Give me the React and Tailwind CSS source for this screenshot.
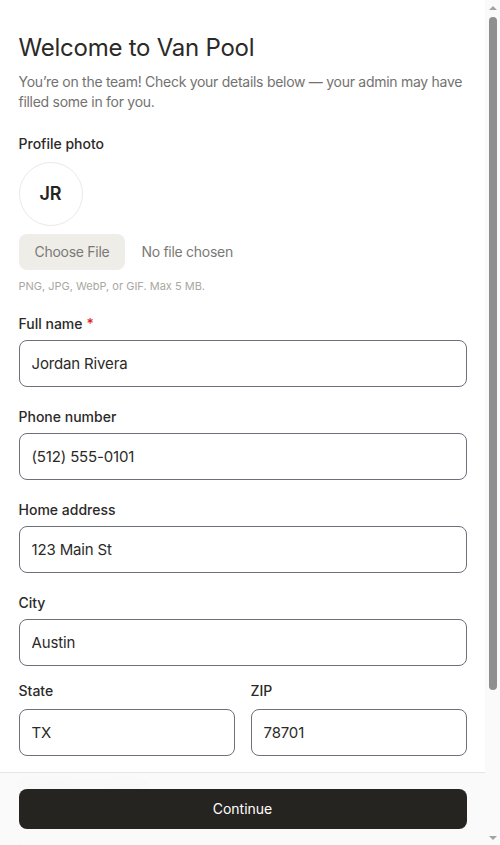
import React from "react";

function Field({ label, value, required, gap = "mb-[6px]" }) {
  return (
    <div>
      <label className={"block text-sm leading-5 font-medium text-[#2b2a28] " + gap}>
        {label}
        {required && <span className="text-[#dc2626] ml-1">*</span>}
      </label>
      <input
        type="text"
        defaultValue={value}
        className="block w-full h-[47px] rounded-lg border border-[#6b7079] bg-white px-3 text-[15px] tracking-[-0.01em] text-[#2b2a28] outline-none"
      />
    </div>
  );
}

function FakeScrollbar() {
  return (
    <div className="w-[15px] h-full shrink-0 bg-[#fafafa] flex flex-col items-center">
      <div className="h-[15px] flex items-center justify-center">
        <div className="w-0 h-0 border-l-[4px] border-r-[4px] border-b-[4px] border-l-transparent border-r-transparent border-b-[#a3a3a3]" />
      </div>
      <div className="mt-[2px] w-[8px] h-[673px] rounded-full bg-[#8f8f8f]" />
      <div className="flex-1" />
      <div className="h-[15px] flex items-center justify-center">
        <div className="w-0 h-0 border-l-[4px] border-r-[4px] border-t-[4px] border-l-transparent border-r-transparent border-t-[#a3a3a3]" />
      </div>
    </div>
  );
}

export default function App() {
  return (
    <div
      className="h-[845px] flex bg-white"
      style={{ fontFamily: "Inter, 'Noto Sans', sans-serif" }}
    >
      <div className="flex-1 h-full overflow-y-auto flex flex-col">
        <main className="flex-1 shrink-0 w-full max-w-md mx-auto pt-8 pb-6">
          <h1 className="text-2xl leading-8 font-normal tracking-[-0.01em] text-[#2b2a28]">
            Welcome to Van Pool
          </h1>
          <p className="mt-2 text-sm leading-5 tracking-[-0.02em] text-[#737270]">
            You’re on the team! Check your details below — your admin may have
            filled some in for you.
          </p>

          <div className="mt-[22px]">
            <div className="text-sm leading-5 font-medium text-[#2b2a28] mb-2">
              Profile photo
            </div>
            <div className="w-16 h-16 rounded-full border border-[#ebe9e4] bg-white flex items-center justify-center">
              <span className="text-lg font-semibold text-[#262420]">JR</span>
            </div>
            <input
              type="file"
              className="mt-2 block text-sm tracking-[-0.02em] text-[#7a7975] file:mr-4 file:py-2 file:px-4 file:rounded-lg file:border-0 file:bg-[#efede8] file:text-sm file:text-[#7a7975] file:font-normal"
            />
            <p className="mt-2 text-[11px] leading-4 text-[#a9a8a1]">
              PNG, JPG, WebP, or GIF. Max 5 MB.
            </p>
          </div>

          <div className="mt-5 flex flex-col gap-5">
            <Field label="Full name" value="Jordan Rivera" required />
            <Field label="Phone number" value="(512) 555-0101" />
            <Field label="Home address" value="123 Main St" />
            <Field label="City" value="Austin" />
          </div>
          <div className="mt-[15px] grid grid-cols-2 gap-4">
            <Field label="State" value="TX" gap="mb-2" />
            <Field label="ZIP" value="78701" gap="mb-2" />
          </div>
          <div className="mt-5 flex flex-col gap-5">
            <Field label="Emergency contact" value="" />
            <Field label="Emergency contact phone" value="" />
          </div>
        </main>

        <footer className="sticky bottom-0 shrink-0 border-t border-[#e6e5e2] bg-[#fafafa]/95 backdrop-blur-sm">
          <div className="max-w-md mx-auto pt-4 pb-4">
            <button
              type="button"
              className="w-full h-10 rounded-lg bg-[#262420] text-white text-sm font-normal"
            >
              Continue
            </button>
          </div>
        </footer>
      </div>
      <FakeScrollbar />
    </div>
  );
}
